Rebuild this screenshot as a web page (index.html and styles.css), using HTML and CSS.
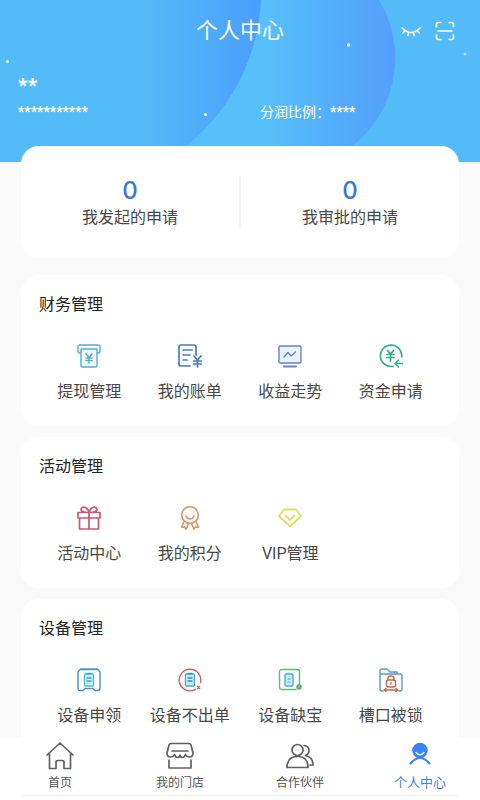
FILE: index.html
```html
<!DOCTYPE html>
<html lang="zh-CN">
<head>
<meta charset="utf-8">
<meta name="viewport" content="width=device-width, initial-scale=1">
<title>个人中心</title>
<link rel="stylesheet" href="styles.css">
</head>
<body>
<div class="app">
  <main class="content">
    <header class="hero">
      <svg class="hero-art" viewBox="0 0 480 162" preserveAspectRatio="none" aria-hidden="true">
        <defs>
          <linearGradient id="g1" gradientUnits="userSpaceOnUse" x1="140" y1="0" x2="256" y2="0">
            <stop offset="0" stop-color="#53bbf7"/><stop offset="0.5" stop-color="#50aef9"/><stop offset="1" stop-color="#4b9ffc"/>
          </linearGradient>
          <linearGradient id="g2" gradientUnits="userSpaceOnUse" x1="270" y1="0" x2="395" y2="0">
            <stop offset="0" stop-color="#57bffa"/><stop offset="0.5" stop-color="#53aefa"/><stop offset="1" stop-color="#559ffb"/>
          </linearGradient>
        </defs>
        <path d="M180 162V0H379A112 112 0 0 1 325 162Z" fill="url(#g2)"/>
        <path d="M0 0H261A200 200 0 0 1 163 162H0Z" fill="url(#g1)"/>
        <g fill="#e2fbff"><circle cx="7.500" cy="61.500" r="1.600"/><circle cx="205.500" cy="114.500" r="1.600"/><circle cx="348.500" cy="45" r="1.700"/><circle cx="465" cy="54" r="1.500" opacity=".6"/></g>
      </svg>
      <div class="topbar">
        <h1>个人中心</h1>
        <div class="actions">
          <button type="button" aria-label="显示">
            <svg width="20" height="20" viewBox="0 0 20 20"><path d="M1 7Q10 16 19 7M4.200 9.500L2 12M7.800 11.200L6.800 14.500M12.200 11.200L13.200 14.500M15.800 9.500L18.500 12"/></svg>
          </button>
          <button type="button" aria-label="扫一扫">
            <svg width="20" height="20" viewBox="0 0 20 20"><path d="M1.500 6V3.500Q1.500 1.500 3.500 1.500H6M14 1.500H16.500Q18.500 1.500 18.500 3.500V6M1.500 14V16.500Q1.500 18.500 3.500 18.500H6M14 18.500H16.500Q18.500 18.500 18.500 16.500V14M3 10H17"/></svg>
          </button>
        </div>
      </div>
      <p class="name">**</p>
      <div class="account"><span class="stars">***********</span><span class="ratio">分润比例：<span class="stars">****</span></span></div>
    </header>

    <section class="card summary">
      <a href="#"><strong>0</strong><span>我发起的申请</span></a>
      <a href="#"><strong>0</strong><span>我审批的申请</span></a>
    </section>

    <section class="card">
      <h2>财务管理</h2>
      <div class="grid">
        <a href="#"><svg class="icon" viewBox="0 0 24 24" stroke="#56acd5"><path d="M4 9H3Q1 9 1 7V3Q1 1 3 1H21Q23 1 23 3V7Q23 9 21 9H20"/><path d="M4 5H20V21Q20 23 18 23H6Q4 23 4 21Z" fill="#eef9ff"/><path d="M9 10L12 13.500L15 10M12 13.500V19M9 14H15M9 16.500H15"/></svg><span>提现管理</span></a>
        <a href="#"><svg class="icon" viewBox="0 0 24 24" stroke="#4779ca"><path d="M12 22H3Q1 22 1 20V3Q1 1 3 1H16Q18 1 18 3V11M5 6H14M5 11H12M5 16H9" stroke-width="1.700"/><path d="M16 12L19.500 16L23 12M19.500 16V23M15.500 17H23.500M15.500 20H23.500" stroke-width="1.700"/></svg><span>我的账单</span></a>
        <a href="#"><svg class="icon" viewBox="0 0 24 24" stroke="#6880ca"><rect x="1" y="2" width="22" height="17" rx="1" fill="#e9f2ff"/><path d="M6 13L10 8.500L13 12L17.500 8"/><path d="M6 22.500H18" stroke-width="2"/></svg><span>收益走势</span></a>
        <a href="#"><svg class="icon" viewBox="0 0 24 24" stroke="#34ad89"><path d="M14 22.300A10.700 10.700 0 1 1 22.700 13" stroke-width="1.700"/><path d="M8.500 6.500L11.500 10L14.500 6.500M11.500 10V17M8 10.500H15M8 13.500H15M23.500 19.500H16.500M19.500 16L16 19.500L19.500 23" stroke-width="1.700"/></svg><span>资金申请</span></a>
      </div>
    </section>

    <section class="card">
      <h2>活动管理</h2>
      <div class="grid">
        <a href="#"><svg class="icon" viewBox="0 0 24 24" stroke="#cf5872"><path d="M1 6.500H23V12H1ZM2.500 12V23H21.500V12M12 6.500V23M12 6.500C7 6.500 2.500 5 4.500 2.200C7-.5 11 2 12 6.500C13 2 17-.5 19.500 2.200C21.500 5 17 6.500 12 6.500" stroke-width="1.700"/></svg><span>活动中心</span></a>
        <a href="#"><svg class="icon" viewBox="0 0 24 24" stroke="#dc9a6e"><circle cx="12" cy="9" r="8.300" stroke-width="1.700"/><path d="M8 10Q9 13 12 13Q15 13 16 10M6 15.500L3.500 21.500L6.500 20.800L8 23.300L10.500 17.500M18 15.500L20.500 21.500L17.500 20.800L16 23.300L13.500 17.500" stroke-width="1.700"/></svg><span>我的积分</span></a>
        <a href="#"><svg class="icon" viewBox="0 0 24 24" stroke="#dede65"><path d="M6 3.500H18L23 10L12 20.500L1 10ZM7.500 9.500L12 14L16.500 9.500" stroke-width="1.800"/></svg><span>VIP管理</span></a>
      </div>
    </section>

    <section class="card">
      <h2>设备管理</h2>
      <div class="grid">
        <a href="#"><svg class="icon" viewBox="0 0 24 24" stroke="#4b8fc2"><path d="M3 1.500H21L23 4V20Q23 22.500 21 22.500H18L16 20.500H8L6 22.500H3Q1 22.500 1 20V4Z"/><path d="M4 1H21" stroke-dasharray="1 1.500"/><rect x="7.500" y="6" width="9" height="12" rx="1" stroke="#51b8dc" fill="#c6f0ff"/><path d="M10 5.500H14M10 10H14M10 13H14" stroke="#36a6c8"/></svg><span>设备申领</span></a>
        <a href="#"><svg class="icon" viewBox="0 0 24 24" stroke="#ce625d"><path d="M17.500 21.300A10.800 10.800 0 1 1 22.500 14.500M19.500 18.500L21.500 20.500M21.500 18.500L19.500 20.500"/><rect x="7.500" y="6" width="9" height="12" rx="1" stroke="#51acd2" fill="#c6f0ff"/><path d="M10 5.500H14M10 10H14M10 13H14" stroke="#368fb8"/></svg><span>设备不出单</span></a>
        <a href="#"><svg class="icon" viewBox="0 0 24 24" stroke="#65b976"><path d="M18 21.500H4Q1.500 21.500 1.500 19V4Q1.500 1.500 4 1.500H19Q21.500 1.500 21.500 4V16"/><circle cx="21" cy="19" r="2.700" fill="#4dab62" stroke="none"/><path d="M21 17.800V20.200" stroke="#b2ddb9" stroke-width=".8"/><rect x="7" y="6" width="8" height="12" rx="1" stroke="#51acd2" fill="#c6f0ff"/><path d="M9 5.500H13M10 11H12M10 14H12" stroke="#75b9d2"/></svg><span>设备缺宝</span></a>
        <a href="#"><svg class="icon" viewBox="0 0 24 24" stroke="#579bc9"><path d="M4 23H3Q1 23 1 21V3Q1 1 3 1H8L11 4H18V6M1 6H21Q23 6 23 8V21Q23 23 21 23H20"/><g stroke="#c96845"><rect x="7.500" y="12" width="9" height="7" rx="2"/><path d="M9 12V10Q9 8 12 8Q15 8 15 10V12M12 14.500V16M5 22H19M7 20.500L5 22L7 23.500M17 20.500L19 22L17 23.500"/></g></svg><span>槽口被锁</span></a>
      </div>
    </section>
  </main>

  <nav class="tabs">
    <a href="#"><svg width="28" height="28" viewBox="0 0 28 28"><path d="M1 13L14 1L27 13M3.500 11.500V26.500H10V20Q10 18.500 12 18.500H16Q18 18.500 18 20V26.500H24.500V11.500"/></svg><span>首页</span></a>
    <a href="#"><svg width="28" height="28" viewBox="0 0 28 28"><path d="M5 1.500H23Q24.500 1.500 25 3L27 11Q27 15 23.500 15Q20.500 15 19.500 12.500Q18.500 15.500 16.500 15.500Q14.500 15.500 14 13Q13.500 15.500 11.500 15.500Q9.500 15.500 8.500 12.500Q7.500 15 4.500 15Q1 15 1 11L3 3Q3.500 1.500 5 1.500ZM6 9H22M3 18V26H25V18"/></svg><span>我的门店</span></a>
    <a href="#"><svg width="28" height="28" viewBox="0 0 28 28"><circle cx="11.500" cy="8" r="5.500"/><path d="M1 25.500Q1 14.500 11.500 14.500Q22 14.500 22 25.500ZM18 3.500Q23 4 23 8.500Q23 12 19.500 13.500Q27 15 27 23H24"/></svg><span>合作伙伴</span></a>
    <a href="#" class="active" aria-current="page"><svg width="28" height="28" viewBox="0 0 28 28"><circle cx="14" cy="8.500" r="7.800" fill="#3d84f3" stroke="none"/><path d="M10 10.500Q14 15 18 10.500" stroke="#e6f3ff" stroke-width="1.500"/><path d="M4.500 21.500Q14 10.500 23.500 21.500" stroke="#3d84f3" stroke-width="2.200"/></svg><span>个人中心</span></a>
  </nav>
</div>
</body>
</html>
```
FILE: styles.css
```css
* {
  box-sizing: border-box;
}

body {
  margin: 0;
  background: #fafafa;
  color: #484848;
  font-family: Roboto, "Noto Sans CJK SC", sans-serif;
}

h1, h2, p {
  margin: 0;
  font-weight: 400;
}

a {
  color: inherit;
  text-decoration: none;
}

svg {
  display: block;
  fill: none;
  stroke-linecap: round;
  stroke-linejoin: round;
}

.app {
  display: flex;
  flex-direction: column;
  height: 100vh;
}

.content {
  flex: 1;
  min-height: 0;
  overflow-y: auto;
  scrollbar-width: none;
}

.hero {
  position: relative;
  padding: 16px 0 40px;
  background: #53bbf7;
  color: #fff;
}

.hero-art {
  position: absolute;
  inset: 0;
  width: 100%;
  height: 100%;
}

.topbar {
  position: relative;
  display: grid;
  grid-template-columns: 1fr auto 1fr;
  align-items: center;
  height: 30px;
  padding: 0 25px;
}

.topbar h1 {
  grid-column: 2;
  font-size: 22px;
  line-height: 30px;
}

.actions {
  display: flex;
  justify-content: flex-end;
  gap: 14px;
}

.actions button {
  padding: 0;
  border: 0;
  background: none;
}

.actions svg {
  stroke: #fff;
  stroke-width: 1.6;
}

.name {
  position: relative;
  margin-top: 27px;
  padding-left: 18px;
  font: 700 18px/24px "Noto Sans", sans-serif;
}

.account {
  position: relative;
  display: grid;
  grid-template-columns: 242px 1fr;
  margin-top: 5px;
  padding-left: 18px;
  font-size: 14px;
  line-height: 20px;
}

.account .stars {
  font-weight: 700;
}

.card {
  margin: 0 21px 11px;
  padding: 18px 18px 0;
  min-height: 151px;
  border-radius: 18px;
  background: #fff;
}

.summary {
  position: relative;
  display: flex;
  min-height: 0;
  height: 112px;
  margin-top: -16px;
  margin-bottom: 17px;
  padding: 30px 0 0;
}

.summary a {
  flex: 1;
  text-align: center;
  height: 52px;
}

.summary a + a {
  border-left: 2px solid #f5f5f5;
}

.summary strong {
  display: block;
  color: #3c76d6;
  font: 500 24px/30px Inter, sans-serif;
}

.summary span {
  display: block;
  font-size: 16px;
  line-height: 24px;
}

.card h2 {
  color: #222;
  font-size: 16px;
  line-height: 24px;
}

.grid {
  display: grid;
  grid-template-columns: repeat(4, 1fr);
  margin-top: 27px;
}

.grid a {
  display: flex;
  flex-direction: column;
  align-items: center;
  gap: 12px;
  font-size: 16px;
  line-height: 24px;
  white-space: nowrap;
}

.icon {
  width: 24px;
  height: 24px;
  stroke-width: 1.4;
}

.tabs {
  position: relative;
  display: grid;
  grid-template-columns: repeat(4, 1fr);
  height: 63px;
  padding-top: 5px;
  background: #fff;
}

.tabs::after {
  content: "";
  position: absolute;
  right: 22px;
  bottom: 4px;
  left: 22px;
  height: 1px;
  background: #f5f5f5;
}

.tabs a {
  display: flex;
  flex-direction: column;
  align-items: center;
  gap: 4px;
  color: #555;
  font-size: 12px;
  line-height: 18px;
}

.tabs svg {
  stroke: #606060;
  stroke-width: 1.7;
}

.tabs .active {
  color: #3d7fe8;
  font-size: 13px;
}
```
